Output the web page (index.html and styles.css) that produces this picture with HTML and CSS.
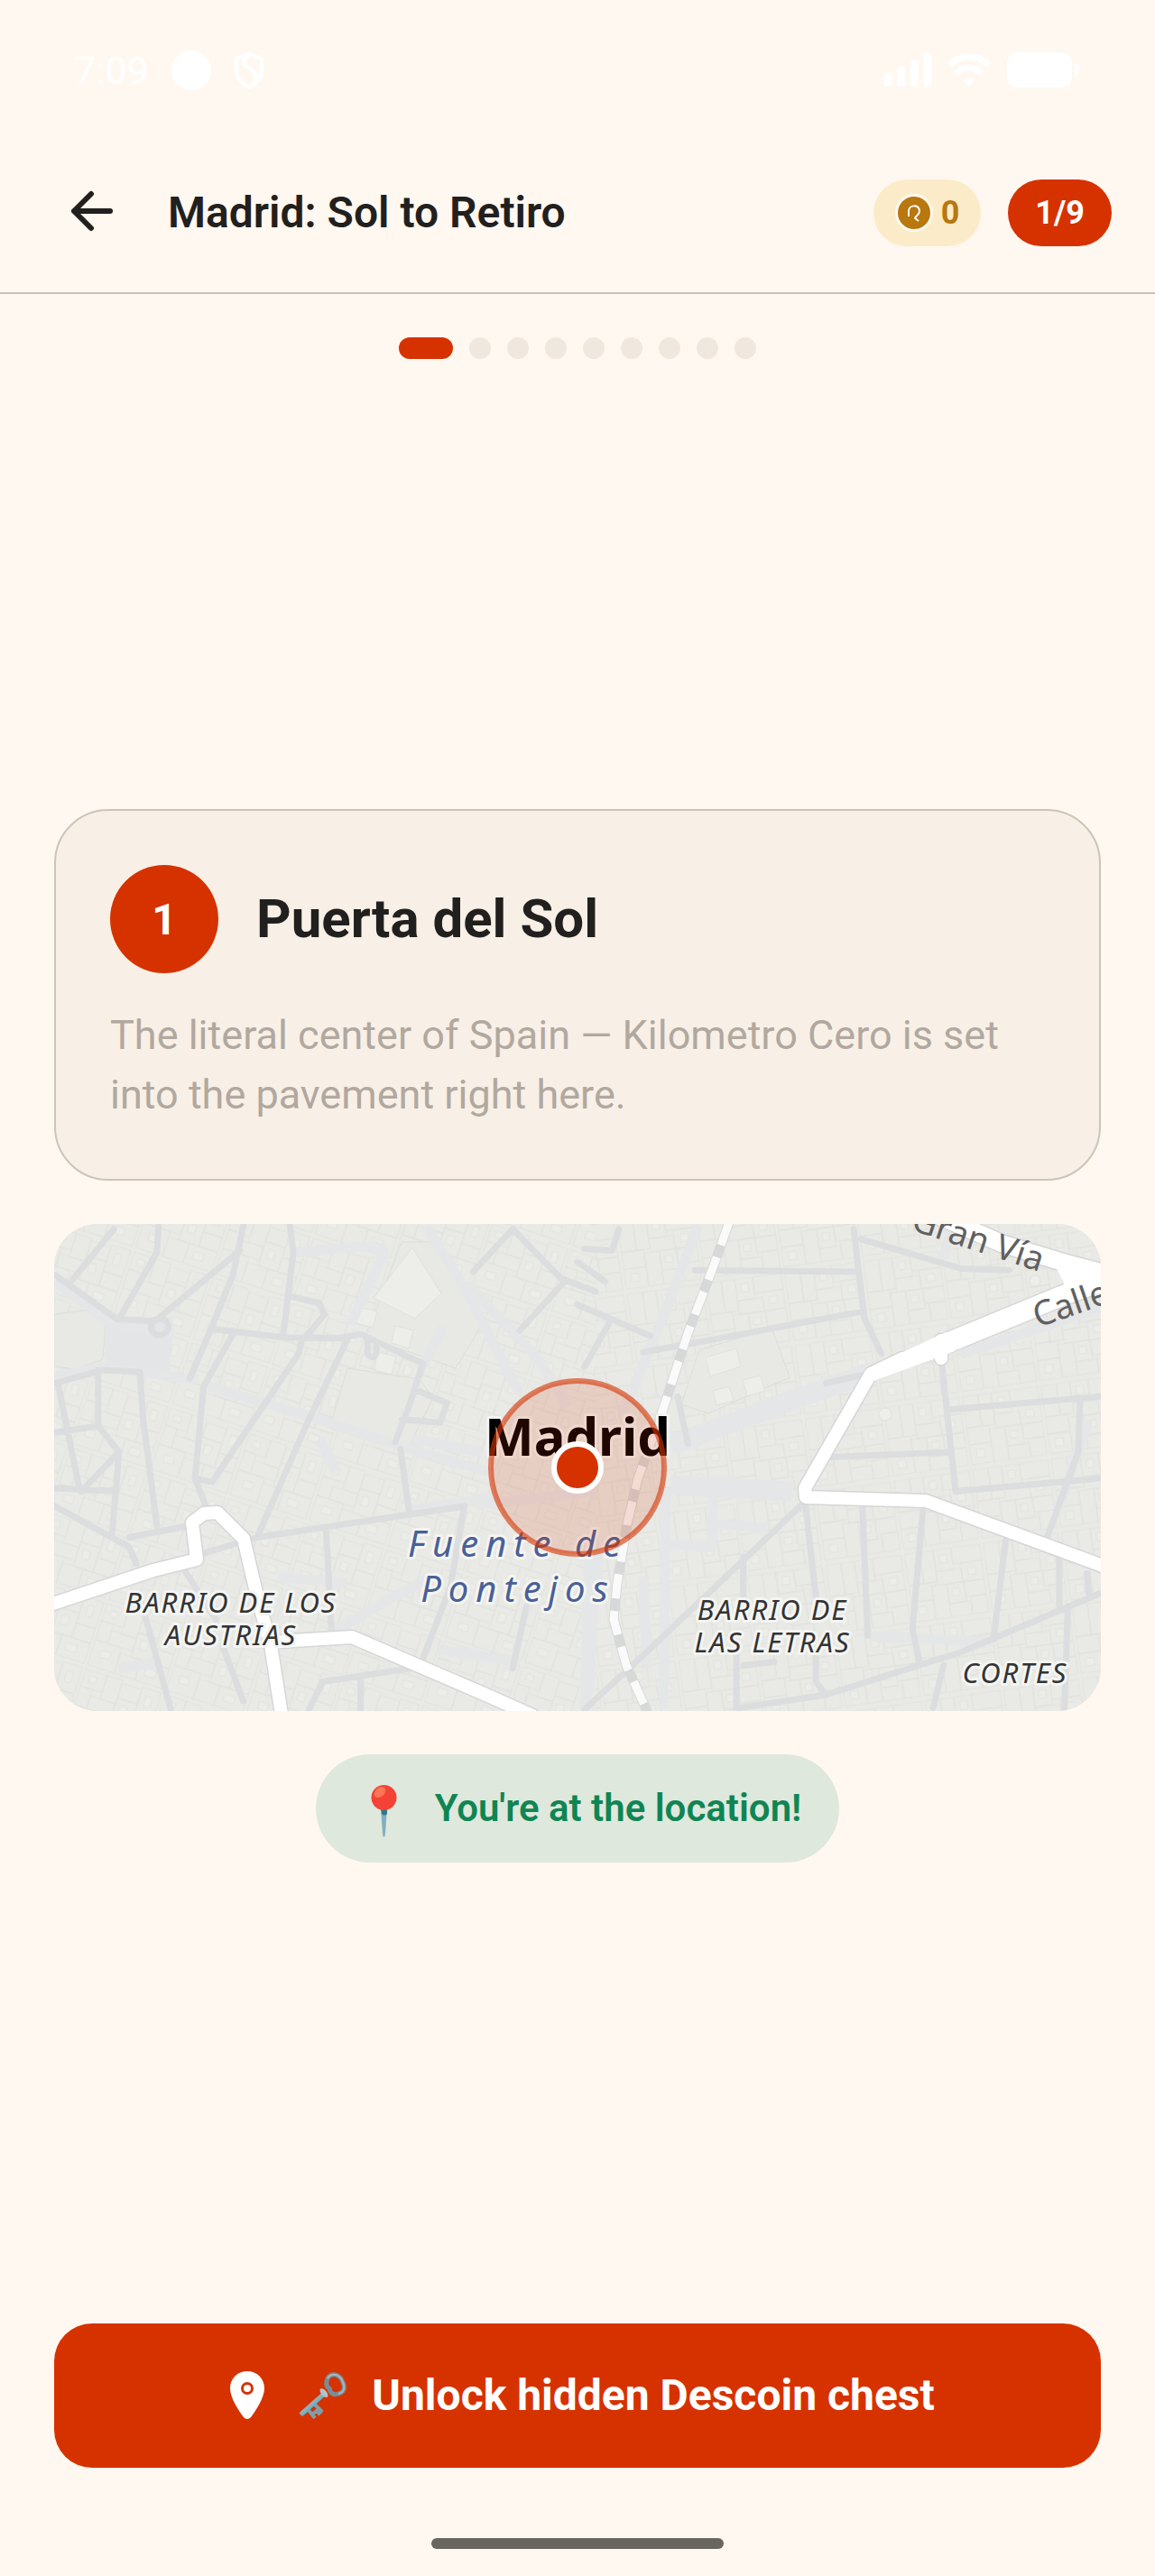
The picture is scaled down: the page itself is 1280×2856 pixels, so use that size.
FILE: index.html
```html
<!DOCTYPE html>
<html lang="en">
<head>
<meta charset="utf-8">
<meta name="viewport" content="width=device-width, initial-scale=1">
<title>Madrid: Sol to Retiro</title>
<link rel="stylesheet" href="styles.css">
</head>
<body>
<div class="screen">
  <div class="statusbar">
    <div class="statusbar-group">
      <span class="clock">7:09</span>
      <svg class="status-dot" viewBox="0 0 46 46" aria-hidden="true"><circle cx="23" cy="23" r="22" fill="#fff"/></svg>
      <svg class="status-shield" viewBox="0 0 34 42" aria-hidden="true"><path d="M17 3 31 8v12c0 9-6 16-14 20C9 36 3 29 3 20V8zM17 4c-7 5-7 9-2 13l6 4c5 4 4 10 1 14" fill="none" stroke="#fff" stroke-width="4" stroke-linejoin="round" stroke-linecap="round"/></svg>
    </div>
    <div class="statusbar-signals">
      <svg width="52" height="38" viewBox="0 0 52 38" aria-hidden="true"><g fill="#fff"><rect y="22" width="9" height="15" rx="3"/><rect x="14" y="15" width="9" height="22" rx="3"/><rect x="29" y="8" width="9" height="29" rx="3"/><rect x="43" width="9" height="37" rx="3"/></g></svg>
      <svg width="48" height="38" viewBox="0 0 48 38" aria-hidden="true"><g fill="none" stroke="#fff" stroke-width="7"><path d="M2 13c13-12 31-12 44 0"/><path d="M10 22c8-8 20-8 28 0"/></g><path d="m24 38-6-8c4-3 8-3 12 0z" fill="#fff"/></svg>
      <svg width="82" height="40" viewBox="0 0 82 40" aria-hidden="true"><rect width="72" height="39" rx="12" fill="#fff"/><path d="M75 12c7 2 7 13 0 15z" fill="#fff"/></svg>
    </div>
  </div>

  <header class="topbar">
    <button class="back" type="button" aria-label="Back">
      <svg width="60" height="60" viewBox="0 0 60 60" aria-hidden="true"><path d="M50 28H10M29 9 10 28l19 19" fill="none" stroke="#22201e" stroke-width="6" stroke-linecap="round" stroke-linejoin="round"/></svg>
    </button>
    <h1 class="title">Madrid: Sol to Retiro</h1>
    <div class="pill pill-coins">
      <svg width="42" height="42" viewBox="0 0 42 42" aria-hidden="true"><circle cx="21" cy="21" r="21" fill="#fff9ef"/><circle cx="21" cy="21" r="18" fill="#b8770f"/><path d="M15 25v-6c0-7 12-8 12 0 0 4-4 5-5 8l4 3" fill="none" stroke="#fff" stroke-width="2"/></svg>
      <span>0</span>
    </div>
    <div class="pill pill-step">1/9</div>
  </header>

  <div class="progress" role="img" aria-label="Stop 1 of 9">
    <i class="step step-on"></i><i class="step"></i><i class="step"></i><i class="step"></i><i class="step"></i><i class="step"></i><i class="step"></i><i class="step"></i><i class="step"></i>
  </div>

  <main class="content">
    <section class="card">
      <div class="card-head">
        <span class="number">1</span>
        <h2 class="place">Puerta del Sol</h2>
      </div>
      <p class="about">The literal center of Spain — Kilometro Cero is set into the pavement right here.</p>
    </section>

    <svg class="map" viewBox="0 0 1160 540" role="img" aria-label="Map of central Madrid">
      <defs>
        <pattern id="lots-a" width="92" height="76" patternUnits="userSpaceOnUse" patternTransform="rotate(18)">
          <path d="M2 2h25v20H2zM27 2h18v27H27zM45 5h23v17H45zM68 2h22v31H68zM2 22h14v22H2zM16 29h29v15H16zM45 22h23v28H45zM2 44h31v29H2zM33 50h24v23H33zM57 50h33v23H57zM68 33h22v17H68z" class="lot"/>
          <path d="M9 8h8v7H9zM51 29h8v10h-8zM75 10h7v12h-7zM12 53h11v8H12zM65 57h12v8H65z" class="yard"/>
        </pattern>
        <pattern id="lots-b" width="88" height="82" patternUnits="userSpaceOnUse" patternTransform="rotate(-8)">
          <path d="M2 2h17v35H2zM19 2h15v35H19zM34 2h20v24H34zM54 2h32v18H54zM34 26h28v15H34zM62 20h24v21H62zM2 37h25v19H2zM27 41h17v37H27zM44 41h19v22H44zM63 41h23v17H63zM2 56h25v22H2zM44 63h24v15H44zM68 58h18v20H68z" class="lot"/>
          <path d="M40 8h8v9h-8zM69 26h9v8h-9zM9 62h9v9H9zM49 47h8v8h-8z" class="yard"/>
        </pattern>
      </defs>
      <rect width="1160" height="540" fill="#e9eae6"/>
      <rect width="600" height="540" fill="url(#lots-a)"/>
      <rect x="600" width="560" height="540" fill="url(#lots-b)"/>
      <path d="m325 160 80 12 15 21-30 60-85-27zM0 100l40-5 17 15-3 40-30 11-24-3zM385 20l40 0 50 90-30 50-100-35zM715 140l80-25 20 55-90 40-30-10z" fill="#e8e9e4" stroke="#dcddd8"/>
      <g fill="#edeeea" stroke="#e0e1dc">
        <path d="m397 26 32 51-29 28-46-23zM338 92l20 5-5 18-18-5zM378 113l20 5-5 20-19-6zM358 142l21 5-5 20-19-5z"/>
        <path d="m722 148 34-10 5 20-34 11zM763 173l20-5 5 17-20 6zM730 185l18-5 5 16-19 5z"/>
        <circle cx="921" cy="211" r="7"/><circle cx="1087" cy="63" r="6"/>
      </g>
      <path d="M58 107 132 103l-4 60-72-4z" fill="#e4e5e6"/>
      <g class="plaza" transform="translate(-20 -16) scale(.3827 .3635)">
        <path d="M1130 50 1230 220 1400 560M500 540 760 620 1050 720 1310 800M750 130 980 110 1010 130 910 350M1250 230 1450 450 1540 600M1280 900 1620 860M1600 1050 1590 1540M55 510 200 480 470 520M55 220 220 350 400 380M820 700 870 800M1070 920 1310 880M240 1400 360 1380M900 1140 700 1120M1090 700 1290 740M820 1310 1160 1110M1160 1340 1400 1380M1180 360 1110 490"/>
      </g>
      <g class="plaza" transform="translate(580 -16) scale(.3827 .3635)">
        <path d="M350 50 240 350 130 620M255 850 250 1520M390 870 390 1030 260 1020M400 960 550 970M60 1050 30 1480M190 1120 200 1400M850 510 1060 430M1110 440 1515 300M1390 920 1480 640M840 1300 1200 1320M1080 60 1060 150"/>
        <path class="plaza-wide" d="M270 720 600 590 840 500M270 840 620 860"/>
      </g>
      <g class="street" transform="translate(-20 -16) scale(.3827 .3635)">
        <path d="M55 200 235 335 345 340 590 125M105 215 225 60M245 325 350 130 355 50M600 50 570 200 500 380 445 515M735 50 745 130 715 390M740 265 820 285 835 320 780 390M515 365 720 390 880 392 940 380 1120 470 1080 600 1040 710M770 395 760 440 510 830M900 400 790 640 640 1000M55 530 190 490 300 495 310 640 350 965M570 380 485 540 460 820 490 900M180 490 180 660 240 740 220 990M55 680 180 660M65 540 125 850M55 850 225 858M55 905 270 1030 290 1080M270 1000 440 965M480 1050 640 1000 1240 905 1200 1150 1120 1370M1055 730 1080 920M840 980 855 1280M1100 550 1190 590 1170 650 1060 640M300 1180 390 1525M540 1330 600 1500M790 1525 830 1440 1080 1400M430 1100 520 1250M1400 370 1530 220M1265 190 1380 60 1520 210 1620 250M1420 1210 1380 1400M940 1430 940 1525M130 860 240 740M460 820 500 830"/>
        <circle cx="358" cy="358" r="25"/><path d="M960 400v40q15 20 25 0v-30"/>
      </g>
      <g class="street" transform="translate(580 -16) scale(.3827 .3635)">
        <path d="M0 290 210 385M90 350 20 480M340 185 800 190M190 435 400 395 830 310M800 60 830 330 880 440M820 90 1110 180 1250 185M290 570 320 715M730 755 1080 740M1055 470 1095 860 1515 820M1080 610 1515 570M1455 590 1450 740 1360 1000M650 900 180 1370 20 1525M660 900 690 1180M825 900 840 1300M1000 920 970 1280 990 1380M1240 1010 1205 1310M1395 1060 1395 1210M470 1520 720 1480 1110 1350 1515 1170M690 1340 690 1440 720 1480M1060 1390 1030 1520M1420 1210 1410 1520M460 1520 460 1360M480 1060 480 1200M1475 1110 1480 1170M20 120 100 125 120 60M0 160 80 220M720 530 820 505M480 1390 570 1380"/>
      </g>
      <path d="M748-2 731 46 702 122 676 202 647 282 635 333 624 398 620 438 634 489 658 542" class="rail-bed"/>
      <path d="M748-2 731 46 702 122 676 202 647 282 635 333 624 398 620 438 634 489 658 542" class="rail"/>
      <g class="road-edge">
        <path d="M-10 424 110 384 158 372 153 331 166 321 181 320 210 349 225 413 240 467 253 550M240 464 265 462 330 458 474 520 530 545M1170 382 966 307 833 303 832 293 905 166 940 149M983 129v20"/>
        <path class="road-mid" d="M960-18 1051 22 1123 44 1170 56"/>
        <path class="road-wide" d="M992 131 1116 80 1170 60"/>
      </g>
      <g class="road">
        <path d="M-10 424 110 384 158 372 153 331 166 321 181 320 210 349 225 413 240 467 253 550M240 464 265 462 330 458 474 520 530 545M1170 382 966 307 833 303 832 293 905 166 940 149M983 129v20"/>
        <path class="road-mid" d="M960-18 1051 22 1123 44 1170 56"/>
        <path class="road-wide" d="M992 131 1116 80 1170 60"/>
        <path d="m902 160 86-40 10 21-90 33z" fill="#fff" stroke="none"/>
        <path d="m1108 44 52 3v30l-45 10 4-22z" fill="#fff" stroke="none"/>
      </g>
      <text class="label label-street" transform="translate(1092 53) rotate(18)" text-anchor="end">Gran Vía</text>
      <text class="label label-street" transform="translate(1090 115) rotate(-19)">Calle</text>
      <text class="label label-area" text-anchor="middle"><tspan x="196" y="431">BARRIO DE LOS</tspan><tspan x="196" y="467">AUSTRIAS</tspan></text>
      <text class="label label-area" text-anchor="middle"><tspan x="796" y="439">BARRIO DE</tspan><tspan x="796" y="475">LAS LETRAS</tspan></text>
      <text class="label label-area" x="1065" y="509" text-anchor="middle">CORTES</text>
      <text class="label label-water" text-anchor="middle"><tspan x="514" y="369">Fuente de</tspan><tspan x="514" y="419">Pontejos</tspan></text>
      <text class="label label-city" x="580" y="257" text-anchor="middle">Madrid</text>
      <circle class="zone" cx="580" cy="270" r="96"/>
      <circle cx="580" cy="270" r="26" fill="#d63200" stroke="#fff" stroke-width="6"/>
    </svg>

    <div class="arrived">
      <svg width="66" height="66" viewBox="0 0 66 66" aria-hidden="true"><path d="M30 33h7l-2 28q-1.500 8-3 0z" fill="#82aec0"/><path d="M30 33h7v6q-3 3-6 0z" fill="#2f7889"/><circle cx="33.500" cy="21" r="14" fill="#f44336"/><ellipse cx="29" cy="15" rx="7" ry="5" fill="#ff7555" transform="rotate(-42 29 15)"/></svg>
      <span>You're at the location!</span>
    </div>
  </main>

  <footer class="actions">
    <button class="unlock" type="button">
      <svg width="60" height="60" viewBox="0 0 60 60" aria-hidden="true"><path fill-rule="evenodd" d="M30 3C19 3 11 11 11 22c0 10 9 24 15 32q4 4 8 0c6-8 15-22 15-32C49 11 41 3 30 3zm0 12a7 7 0 1 1 0 14 7 7 0 0 1 0-14z" fill="#fff"/><circle cx="30" cy="22" r="4" fill="#fff"/></svg>
      <svg width="60" height="60" viewBox="0 0 60 60" aria-hidden="true"><path d="M32 27 5 51" fill="none" stroke="#99acb1" stroke-width="5"/><path d="m13 45 8 10M20 39l9 9M18 51l6-5M24 51l5-5" fill="none" stroke="#819da7" stroke-width="4"/><path d="M32 29 7 52" stroke="#5fb5d0" stroke-width="2"/><ellipse cx="31" cy="27" rx="3" ry="6" transform="rotate(-40 31 27)" fill="#b1c4ca"/><path d="M35 11c3-6 12-6 16 2s3 13-4 15c-6 2-9-1-10-6-4-2-4-6-2-11z" fill="none" stroke="#778e98" stroke-width="5"/><path d="M35 11c3-6 12-6 16 2s3 13-4 15" fill="none" stroke="#a8b7bb" stroke-width="2"/></svg>
      <span>Unlock hidden Descoin chest</span>
    </button>
    <div class="home-indicator"></div>
  </footer>
</div>
</body>
</html>
```
FILE: styles.css
```css
* { box-sizing: border-box; }
body {
  margin: 0;
  background: #fff8f0;
  color: #22201e;
  font-family: Roboto, "Liberation Sans", sans-serif;
}
button { border: 0; padding: 0; background: none; font: inherit; color: inherit; cursor: pointer; }
svg { display: block; flex: none; }
h1, h2, p { margin: 0; }

.screen { display: flex; flex-direction: column; min-height: 100vh; }

.statusbar { display: flex; justify-content: space-between; align-items: center; padding: 48px 82px 36px; color: #fff; }
.statusbar-group { display: flex; align-items: center; gap: 24px; }
.clock { font-size: 43px; line-height: 60px; }
.status-dot { width: 46px; height: 46px; }
.status-shield { width: 34px; height: 42px; }
.statusbar-signals { display: flex; align-items: center; gap: 18px; }

.topbar { display: flex; align-items: center; padding: 54px 48px 51px 72px; border-bottom: 2px solid #c9c0bb; }
.back { display: block; }
.title { flex: 1; margin-left: 54px; font-size: 48px; line-height: 60px; font-weight: 600; }
.pill { display: flex; align-items: center; height: 74px; border-radius: 37px; font-size: 36px; font-weight: 700; margin: -5px 0; }
.topbar { min-height: 182px; }
.pill-coins { gap: 9px; padding: 0 24px; background: #fcebc8; color: #b8770f; }
.pill-step { margin-left: 30px; padding: 0 30px; background: #d63200; color: #fff; }

.progress { display: flex; justify-content: center; gap: 18px; padding: 48px 0 24px; }
.step { width: 24px; height: 24px; border-radius: 12px; background: #f0e8df; }
.step-on { width: 60px; background: #d63200; }

.content { flex: 1; display: flex; flex-direction: column; justify-content: center; gap: 48px; padding: 0 60px; }

.card { padding: 60px; border: 2px solid #cbc5b9; border-radius: 60px; background: #f8f0e6; }
.card-head { display: flex; align-items: center; gap: 42px; }
.number { display: flex; align-items: center; justify-content: center; width: 120px; height: 120px; border-radius: 60px; background: #d63200; color: #fff; font-size: 48px; font-weight: 700; }
.place { font-size: 60px; line-height: 72px; font-weight: 700; }
.about { margin-top: 36px; font-size: 45px; line-height: 66px; color: #b1a8a0; }

.map { width: 100%; height: auto; border-radius: 48px; }
.lot { fill: #e9eae5; stroke: #e2e3de; stroke-width: 1; }
.yard { fill: #ecece8; stroke: #e2e3de; stroke-width: 1; }
.plaza path { fill: none; stroke: #e5e6e7; stroke-width: 11; vector-effect: non-scaling-stroke; stroke-linejoin: round; }
.plaza .plaza-wide { stroke-width: 22; }
.street path, .street circle { fill: none; stroke: #dcddde; stroke-width: 7; vector-effect: non-scaling-stroke; stroke-linejoin: round; stroke-linecap: round; }
.rail-bed { fill: none; stroke: #d7d8d8; stroke-width: 11; }
.rail { fill: none; stroke: #fafafa; stroke-width: 9; stroke-dasharray: 27 14; }
.road, .road-edge { fill: none; stroke: #fff; stroke-width: 14; stroke-linejoin: round; stroke-linecap: round; }
.road-edge { stroke: #d6d6d8; stroke-width: 17; }
.road-mid { stroke-width: 19; }
.road-wide { stroke-width: 22; }
.road-edge .road-mid { stroke-width: 22; }
.road-edge .road-wide { stroke-width: 25; }
.label { font-family: "Noto Sans", "Open Sans", sans-serif; paint-order: stroke; stroke: #f4f5f3; stroke-width: 6; stroke-linejoin: round; }
.label-street { font-size: 38px; fill: #606060; stroke: none; }
.label-area { font-size: 31px; font-style: italic; letter-spacing: 2px; fill: #333; }
.label-water { font-size: 40px; font-style: italic; letter-spacing: 8px; fill: #4a6096; }
.label-city { font-size: 58px; font-weight: 700; fill: #000; }
.zone { fill: #d63200; fill-opacity: .15; stroke: #d63200; stroke-opacity: .6; stroke-width: 6; }

.arrived { align-self: center; display: flex; align-items: center; gap: 24px; padding: 27px 42px; border-radius: 60px; background: #dfe8dc; color: #0f8554; font-size: 42px; line-height: 60px; font-weight: 600; }

.actions { display: flex; flex-direction: column; align-items: center; padding: 36px 60px 30px; }
.unlock { display: flex; align-items: center; justify-content: center; gap: 24px; width: 100%; padding: 50px 36px; border-radius: 42px; background: #d63200; color: #fff; font-size: 48px; line-height: 60px; font-weight: 700; }
.home-indicator { width: 324px; height: 12px; margin-top: 78px; border-radius: 6px; background: #69655f; }
```
